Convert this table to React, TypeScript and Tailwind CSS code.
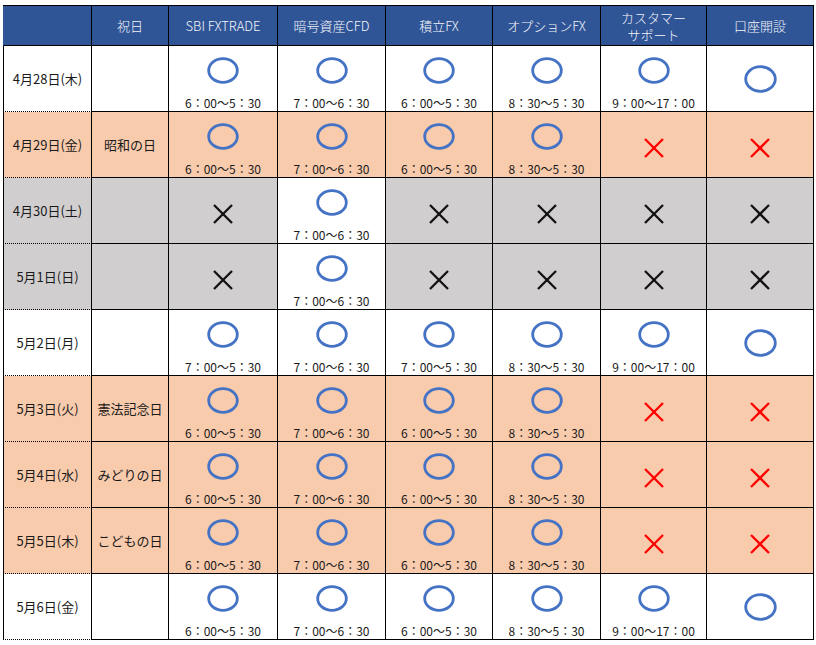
import React from "react";

type Cell =
  | { k: "o"; t: string; bg?: string }
  | { k: "x"; red: boolean; bg?: string };

const O = (t: string, bg?: string): Cell => ({ k: "o", t, bg });
const XR: Cell = { k: "x", red: true };
const XB: Cell = { k: "x", red: false };

type Row = { date: string; hol: string; bg: string; cells: Cell[] };

const WHITE = "bg-white";
const PEACH = "bg-[#f8cbad]";
const GRAY = "bg-[#d0cece]";

const rows: Row[] = [
  {
    date: "4月28日(木)",
    hol: "",
    bg: WHITE,
    cells: [O("6：00〜5：30"), O("7：00〜6：30"), O("6：00〜5：30"), O("8：30〜5：30"), O("9：00〜17：00"), O("")],
  },
  {
    date: "4月29日(金)",
    hol: "昭和の日",
    bg: PEACH,
    cells: [O("6：00〜5：30"), O("7：00〜6：30"), O("6：00〜5：30"), O("8：30〜5：30"), XR, XR],
  },
  {
    date: "4月30日(土)",
    hol: "",
    bg: GRAY,
    cells: [XB, O("7：00〜6：30", WHITE), XB, XB, XB, XB],
  },
  {
    date: "5月1日(日)",
    hol: "",
    bg: GRAY,
    cells: [XB, O("7：00〜6：30", WHITE), XB, XB, XB, XB],
  },
  {
    date: "5月2日(月)",
    hol: "",
    bg: WHITE,
    cells: [O("7：00〜5：30"), O("7：00〜6：30"), O("7：00〜5：30"), O("8：30〜5：30"), O("9：00〜17：00"), O("")],
  },
  {
    date: "5月3日(火)",
    hol: "憲法記念日",
    bg: PEACH,
    cells: [O("6：00〜5：30"), O("7：00〜6：30"), O("6：00〜5：30"), O("8：30〜5：30"), XR, XR],
  },
  {
    date: "5月4日(水)",
    hol: "みどりの日",
    bg: PEACH,
    cells: [O("6：00〜5：30"), O("7：00〜6：30"), O("6：00〜5：30"), O("8：30〜5：30"), XR, XR],
  },
  {
    date: "5月5日(木)",
    hol: "こどもの日",
    bg: PEACH,
    cells: [O("6：00〜5：30"), O("7：00〜6：30"), O("6：00〜5：30"), O("8：30〜5：30"), XR, XR],
  },
  {
    date: "5月6日(金)",
    hol: "",
    bg: WHITE,
    cells: [O("6：00〜5：30"), O("7：00〜6：30"), O("6：00〜5：30"), O("8：30〜5：30"), O("9：00〜17：00"), O("")],
  },
];

function Circle({ big }: { big?: boolean }) {
  const w = big ? 33 : 32;
  const h = big ? 28 : 27;
  return (
    <svg width={w} height={h} viewBox={`0 0 ${w} ${h}`} className="block">
      <ellipse
        cx={w / 2}
        cy={h / 2}
        rx={w / 2 - 1.7}
        ry={h / 2 - 1.7}
        fill="none"
        stroke="#4472c4"
        strokeWidth="2.8"
      />
    </svg>
  );
}

function Cross({ red }: { red: boolean }) {
  const c = red ? "#ff0000" : "#111111";
  return (
    <svg width="22" height="22" viewBox="0 0 22 22" className="block">
      <line x1="2" y1="2" x2="20" y2="20" stroke={c} strokeWidth="2.3" />
      <line x1="20" y1="2" x2="2" y2="20" stroke={c} strokeWidth="2.3" />
    </svg>
  );
}

function BodyCell({ cell, rowBg }: { cell: Cell; rowBg: string }) {
  const bg = cell.bg ?? rowBg;
  if (cell.k === "x") {
    return (
      <div className={`${bg} border-r border-b border-black flex items-center justify-center pt-[6px]`}>
        <Cross red={cell.red} />
      </div>
    );
  }
  if (cell.t === "") {
    return (
      <div className={`${bg} border-r border-b border-black flex items-center justify-center`}>
        <Circle big />
      </div>
    );
  }
  return (
    <div className={`${bg} border-r border-b border-black flex flex-col items-center pt-[11px]`}>
      <Circle />
      <div className="mt-[12px] text-[12px] leading-[14px] text-[#1a1a1a] whitespace-nowrap">{cell.t}</div>
    </div>
  );
}

const headers = ["SBI FXTRADE", "暗号資産CFD", "積立FX", "オプションFX", "カスタマー\nサポート", "口座開設"];

export default function App() {
  return (
    <div
      className="w-[816px] h-[645px] bg-white pl-[3px] pt-[5px]"
      style={{ fontFamily: '"Noto Sans CJK JP", "Noto Sans", sans-serif' }}
    >
      <div className="grid grid-cols-[89px_77px_109px_108px_107px_108px_106px_107px] grid-rows-[40px_repeat(9,66px)] border-t border-black w-[811px]">
        {/* header */}
        <div className="bg-[#2f5597] border-l border-l-[#2f5597] border-r border-b border-black" />
        <div className="bg-[#2f5597] border-r border-b border-black flex items-center justify-center text-[#f4f4f8] text-[13px] font-light">
          祝日
        </div>
        {headers.map((h, i) => (
          <div
            key={i}
            className="bg-[#2f5597] border-r border-b border-black flex items-center justify-center text-[#f4f4f8] text-[13px] font-light leading-[17px] text-center whitespace-pre"
          >
            {h}
          </div>
        ))}
        {rows.map((r, ri) => (
          <React.Fragment key={ri}>
            <div
              className={`${r.bg} border-l border-l-black border-r border-r-black border-b border-b-black border-dotted flex items-center justify-center text-[13px] text-[#1a1a1a]`}
              style={{ borderLeftStyle: "solid", borderRightStyle: "solid", borderBottomStyle: "dotted" }}
            >
              {r.date}
            </div>
            <div className={`${r.bg} border-r border-b border-black flex items-center justify-center text-[13px] text-[#1a1a1a]`}>
              {r.hol}
            </div>
            {r.cells.map((c, ci) => (
              <BodyCell key={ci} cell={c} rowBg={r.bg} />
            ))}
          </React.Fragment>
        ))}
      </div>
    </div>
  );
}
